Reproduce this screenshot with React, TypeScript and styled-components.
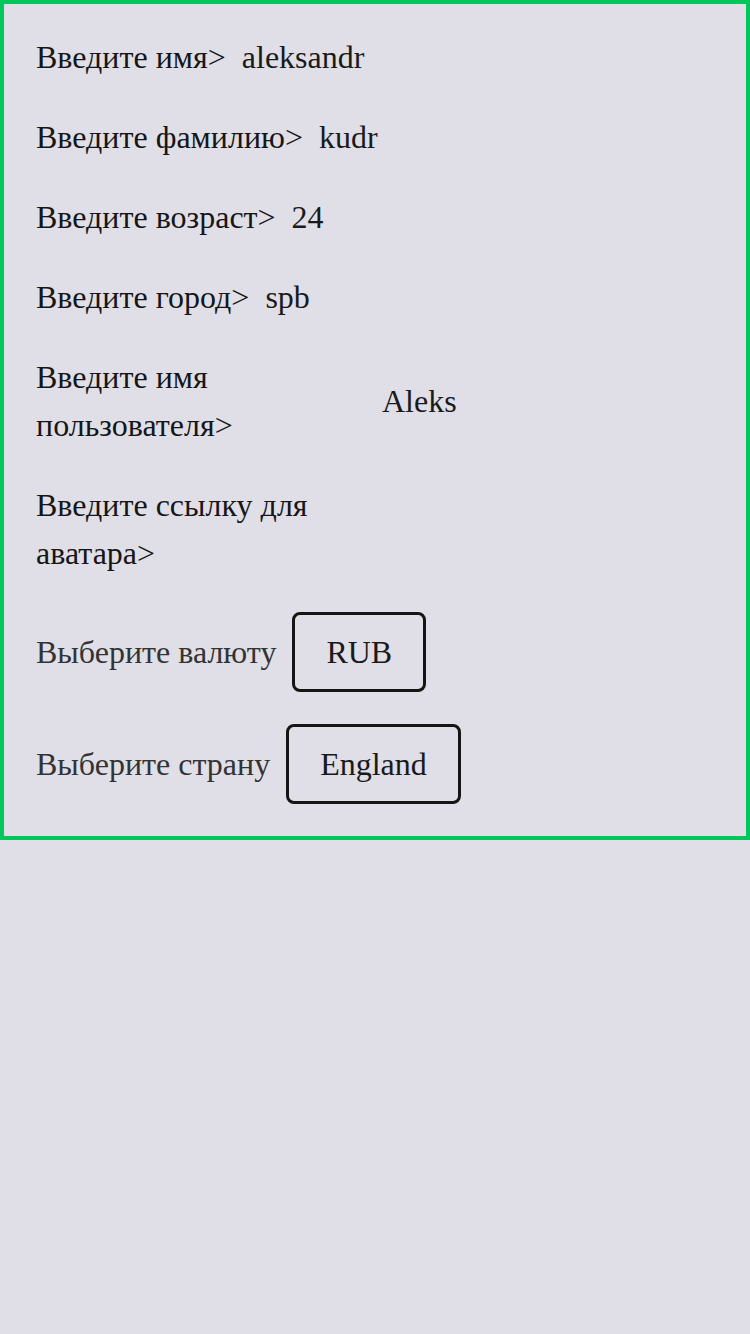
import React from "react";
import styled, { createGlobalStyle } from "styled-components";

const GlobalStyle = createGlobalStyle`
  html, body {
    margin: 0;
    padding: 0;
    background: #e0dfe8;
  }
  body {
    font-family: "Liberation Serif", "Times New Roman", serif;
    min-height: 1334px;
  }
`;

const Form = styled.div`
  border: 4px solid #00c65b;
  padding: 29px 32px 32px;
  display: flex;
  flex-direction: column;
  gap: 32px;
`;

const Row = styled.div`
  display: flex;
  align-items: center;
  gap: 16px;
  font-size: 32px;
  line-height: 48px;
  color: #161616;
`;

const SelectRow = styled(Row)`
  min-height: 79px;
`;

const Label = styled.span<{ $muted?: boolean }>`
  max-width: 330px;
  color: ${(p) => (p.$muted ? "#333333" : "#161616")};
`;

const Value = styled.span`
  color: #1a1a1a;
`;

const Selects = styled.div`
  display: flex;
  flex-direction: column;
  gap: 32px;
  margin-top: 3px;
`;

const SelectBox = styled.div`
  border: 3px solid #151515;
  border-radius: 8px;
  padding: 13px 31px;
  color: #1a1a1a;
`;

const inputs = [
  { label: "Введите имя>", value: "aleksandr" },
  { label: "Введите фамилию>", value: "kudr" },
  { label: "Введите возраст>", value: "24" },
  { label: "Введите город>", value: "spb" },
  { label: "Введите имя пользователя>", value: "Aleks" },
  { label: "Введите ссылку для аватара>", value: "" },
];

const selects = [
  { label: "Выберите валюту", value: "RUB" },
  { label: "Выберите страну", value: "England" },
];

const App = () => {
  return (
    <>
      <GlobalStyle />
      <Form>
        {inputs.map((item) => (
          <Row key={item.label}>
            <Label>{item.label}</Label>
            <Value>{item.value}</Value>
          </Row>
        ))}
        <Selects>
          {selects.map((item) => (
            <SelectRow key={item.label}>
              <Label $muted>{item.label}</Label>
              <SelectBox>{item.value}</SelectBox>
            </SelectRow>
          ))}
        </Selects>
      </Form>
    </>
  );
};

export default App;
